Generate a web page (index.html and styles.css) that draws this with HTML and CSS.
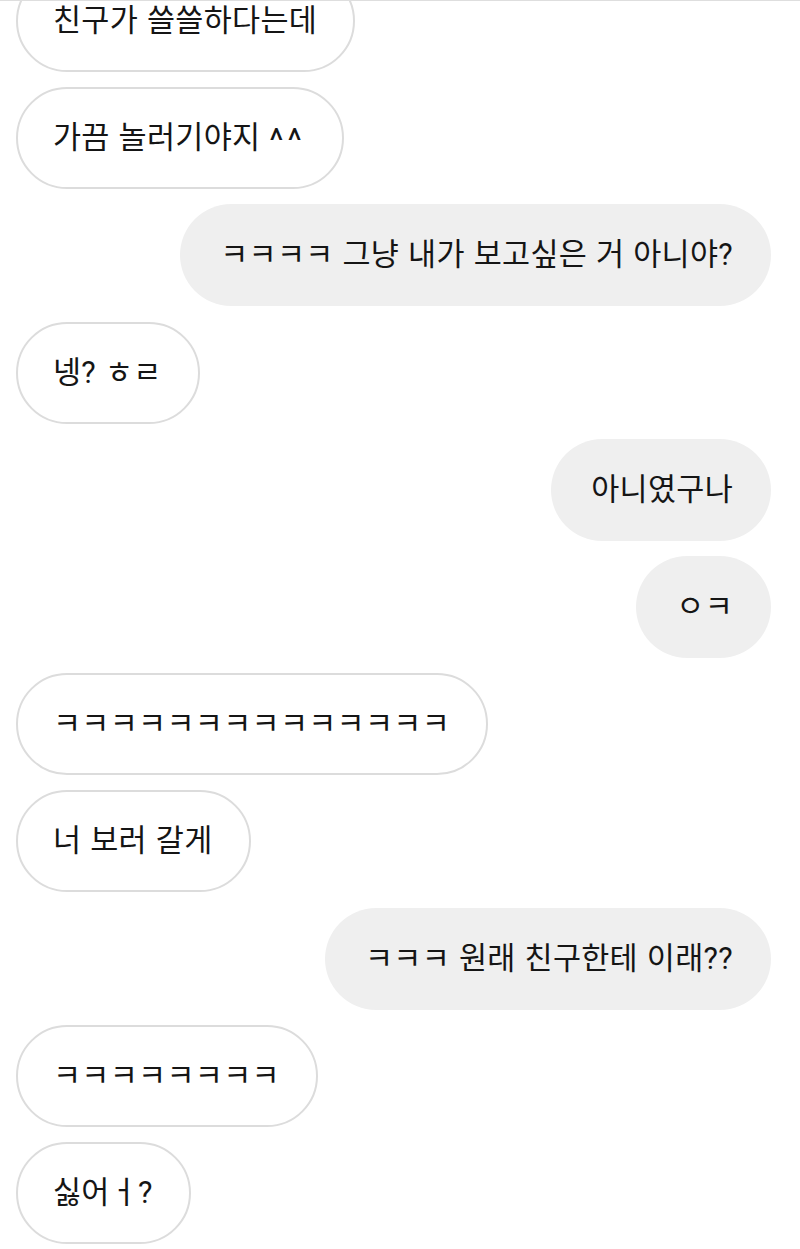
FILE: index.html
```html
<!DOCTYPE html>
<html lang="ko">
<head>
  <meta charset="UTF-8" />
  <meta name="viewport" content="width=device-width, initial-scale=1.0"/>
  <title>대화</title>
  <link rel="stylesheet" href="styles.css">
</head>
<body>
  <div class="chat">
    <div class="msg them">친구가 쓸쓸하다는데</div>
    <div class="msg them">가끔 놀러기야지&nbsp;<span class="caret">^^</span></div>
    <div class="msg me">ㅋㅋㅋㅋ 그냥 내가 보고싶은 거 아니야?</div>
    <div class="msg them">넹? ㅎㄹ</div>
    <div class="msg me">아니였구나</div>
    <div class="msg me">ㅇㅋ</div>
    <div class="msg them">ㅋㅋㅋㅋㅋㅋㅋㅋㅋㅋㅋㅋㅋㅋ</div>
    <div class="msg them">너 보러 갈게</div>
    <div class="msg me">ㅋㅋㅋ 원래 친구한테 이래??</div>
    <div class="msg them">ㅋㅋㅋㅋㅋㅋㅋㅋ</div>
    <div class="msg them">싫어ㅓ?</div>
  </div>
</body>
</html>
```

FILE: styles.css
```css
* {
  box-sizing: border-box;
}

body {
  margin: 0;
  background-color: #fff;
  color: #151515;
  font-family: Roboto, "Noto Sans CJK KR", sans-serif;
  overflow: hidden;
  border-top: 1px solid #dedede;
}

.chat {
  display: flex;
  flex-direction: column;
  gap: 15.2px;
  padding: 0 29px 0 16px;
  margin-top: -31px;
}

.msg {
  height: 102px;
  display: flex;
  align-items: center;
  font-size: 30.5px;
  line-height: 36px;
  word-spacing: 1px;
  letter-spacing: 0.3px;
  white-space: nowrap;
  border-radius: 51px;
}

.caret {
  font-size: 34px;
  letter-spacing: 4px;
  margin-top: 4px;
}

.them {
  align-self: flex-start;
  padding: 0 36px 0 35px;
  border: 2px solid #dcdcdc;
  background-color: #fff;
}

.me {
  align-self: flex-end;
  padding: 0 38px 0 40px;
  background-color: #efefef;
}
```
